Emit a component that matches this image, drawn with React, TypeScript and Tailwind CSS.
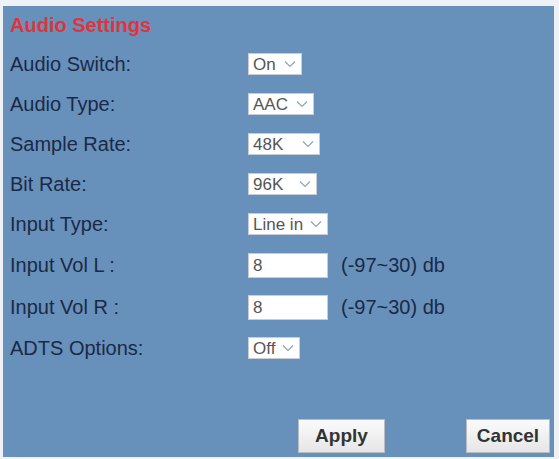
import { ReactNode } from 'react';

const font = { fontFamily: '"Liberation Sans", Arial, sans-serif' };

function Chevron() {
  return (
    <svg width="12" height="8" viewBox="0 0 12 8" fill="none" className="shrink-0">
      <path d="M1 1.5 L6 6.5 L11 1.5" stroke="#8fa3c2" strokeWidth="1.2" />
    </svg>
  );
}

function Select({ value, width }: { value: string; width: string }) {
  return (
    <div className={`${width} h-[22px] bg-white border border-[#c9ccd2] flex items-center justify-between pl-[4px] pr-[5px] text-[17px] leading-none text-[#555]`}>
      <span>{value}</span>
      <Chevron />
    </div>
  );
}

function TextBox({ value }: { value: string }) {
  return (
    <div className="w-[80px] h-[25px] bg-white border border-[#c9ccd2] flex items-center pl-[4px] text-[17px] leading-none text-[#555]">
      {value}
    </div>
  );
}

function Row({ label, h, children }: { label: string; h: string; children: ReactNode }) {
  return (
    <div className={`${h} flex items-center`}>
      <div className="w-[238px] text-[20px] text-[#1b2947] leading-none">{label}</div>
      <div className="flex items-center gap-[13px]">{children}</div>
    </div>
  );
}

export default function App() {
  return (
    <div style={font} className="w-[559px] h-[459px] bg-[#eef2f6] pt-[6px] pl-[3px] pr-[5px] pb-[2px]">
      <div className="h-full bg-[#6791bb] flex flex-col pl-[7px]">
        <div className="h-[38px] pt-[9px] text-[20px] font-bold text-[#e0343c] leading-none">Audio Settings</div>
        <Row label="Audio Switch:" h="h-[40px]">
          <Select value="On" width="w-[54px]" />
        </Row>
        <Row label="Audio Type:" h="h-[40px]">
          <Select value="AAC" width="w-[66px]" />
        </Row>
        <Row label="Sample Rate:" h="h-[40px]">
          <Select value="48K" width="w-[72px]" />
        </Row>
        <Row label="Bit Rate:" h="h-[40px]">
          <Select value="96K" width="w-[69px]" />
        </Row>
        <Row label="Input Type:" h="h-[40px]">
          <Select value="Line in" width="w-[80px]" />
        </Row>
        <Row label="Input Vol L :" h="h-[42px]">
          <TextBox value="8" />
          <span className="text-[20px] text-[#1b2947] leading-none">(-97~30) db</span>
        </Row>
        <Row label="Input Vol R :" h="h-[42px]">
          <TextBox value="8" />
          <span className="text-[20px] text-[#1b2947] leading-none">(-97~30) db</span>
        </Row>
        <Row label="ADTS Options:" h="h-[40px]">
          <Select value="Off" width="w-[52px]" />
        </Row>
        <div className="flex-1" />
        <div className="flex justify-end gap-[81px] pr-[4px] pb-[4px]">
          <button className="w-[87px] h-[34px] bg-gradient-to-b from-[#fbfbfb] to-[#e6e6e6] border border-[#b9bcc2] text-[19px] font-bold text-[#333]">
            Apply
          </button>
          <button className="w-[84px] h-[34px] bg-gradient-to-b from-[#fbfbfb] to-[#e6e6e6] border border-[#b9bcc2] text-[19px] font-bold text-[#333]">
            Cancel
          </button>
        </div>
      </div>
    </div>
  );
}
